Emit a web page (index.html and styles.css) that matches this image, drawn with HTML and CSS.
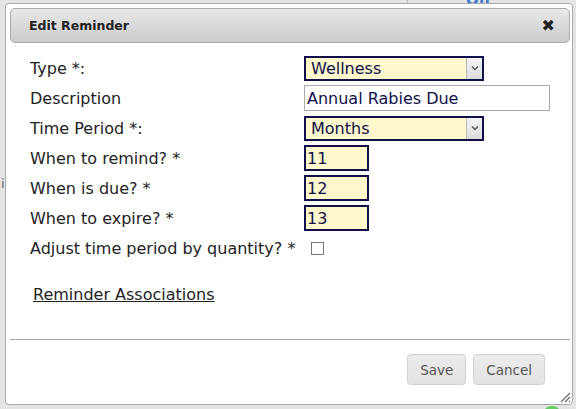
FILE: index.html
```html
<!DOCTYPE html>
<html>
<head>
<meta charset="utf-8">
<link rel="stylesheet" href="styles.css">
</head>
<body>
<div class="backdrop">
  <span class="bg-off">Off</span>
  <span class="bg-line"></span>
  <span class="bg-i">i</span>
  <span class="bg-green"></span>
  <div class="dialog">
    <div class="titlebar">
      <span class="title">Edit Reminder</span>
      <span class="close">✖</span>
    </div>
    <div class="content">
      <div class="form">
        <label class="lbl">Type *:</label>
        <div class="field"><div class="select w180"><span class="val">Wellness</span><span class="arrow"><svg width="8" height="6" viewBox="0 0 8 6"><path d="M1 1.5 L4 4.5 L7 1.5" fill="none" stroke="#555" stroke-width="1.4"/></svg></span></div></div>
        <label class="lbl">Description</label>
        <div class="field"><div class="text">Annual Rabies Due</div></div>
        <label class="lbl">Time Period *:</label>
        <div class="field"><div class="select w180"><span class="val">Months</span><span class="arrow"><svg width="8" height="6" viewBox="0 0 8 6"><path d="M1 1.5 L4 4.5 L7 1.5" fill="none" stroke="#555" stroke-width="1.4"/></svg></span></div></div>
        <label class="lbl">When to remind? *</label>
        <div class="field"><div class="num">11</div></div>
        <label class="lbl">When is due? *</label>
        <div class="field"><div class="num">12</div></div>
        <label class="lbl">When to expire? *</label>
        <div class="field"><div class="num">13</div></div>
        <label class="lbl">Adjust time period by quantity? *</label>
        <div class="field"><span class="check"></span></div>
      </div>
      <div class="assoc"><a class="assoc-link">Reminder Associations</a></div>
    </div>
    <div class="buttons">
      <button class="btn">Save</button>
      <button class="btn">Cancel</button>
    </div>
    <span class="grip"><svg width="12" height="12" viewBox="0 0 12 12"><path d="M11 2 L2 11 M11 6 L6 11 M11 10 L10 11" stroke="#666" stroke-width="1.2"/></svg></span>
  </div>
</div>
</body>
</html>
```

FILE: styles.css
```css
html, body {
  margin: 0;
  padding: 0;
}
body {
  width: 576px;
  height: 409px;
  overflow: hidden;
  background: #e4e4e4;
  font-family: "DejaVu Sans", Verdana, sans-serif;
}
.backdrop {
  position: relative;
  width: 576px;
  height: 409px;
  padding: 3px 0 0 5px;
  box-sizing: border-box;
}
.bg-off {
  position: absolute;
  left: 466px;
  top: -9px;
  color: #3a78d0;
  font-size: 15px;
  font-weight: bold;
}
.bg-line {
  position: absolute;
  left: 407px;
  top: 0;
  width: 1px;
  height: 4px;
  background: #bbb;
}
.bg-i {
  position: absolute;
  left: 1px;
  top: 176px;
  font-size: 13px;
  color: #666;
}
.bg-green {
  position: absolute;
  left: 545px;
  top: 406px;
  width: 14px;
  height: 8px;
  border-radius: 50%;
  background: #6c6;
}
.dialog {
  position: relative;
  width: 568px;
  height: 402px;
  box-sizing: border-box;
  background: #fff;
  border: 1px solid #aaa;
  border-radius: 4px;
  padding: 4px 2px 4px 4px;
  display: flex;
  flex-direction: column;
}
.titlebar {
  height: 35px;
  flex: none;
  box-sizing: border-box;
  border: 1px solid #aaa;
  border-radius: 5px;
  background: linear-gradient(#e8e8e8, #cccccc);
  display: flex;
  align-items: center;
  justify-content: space-between;
  padding: 0 14px 0 18px;
}
.title {
  font-family: "DejaVu Sans", Verdana, sans-serif;
  font-weight: bold;
  font-size: 12.5px;
  color: #222;
}
.close {
  font-size: 16px;
  font-weight: bold;
  color: #222;
  font-family: "DejaVu Sans", sans-serif;
}
.content {
  flex: 1;
  padding: 12px 0 0 20px;
  border-bottom: 1px solid #aaa;
}
.form {
  display: grid;
  grid-template-columns: 274px auto;
  grid-auto-rows: 26px;
  row-gap: 4px;
  align-items: center;
}
.lbl {
  font-size: 16px;
  color: #222;
}
.field {
  display: flex;
  align-items: center;
}
.select {
  height: 25px;
  box-sizing: border-box;
  border: 2px solid #10104a;
  background: #fff8cc;
  display: flex;
  align-items: center;
  justify-content: space-between;
  color: #10104a;
  font-size: 16px;
}
.w180 {
  width: 180px;
}
.val {
  padding-left: 5px;
}
.arrow {
  width: 15px;
  height: 21px;
  background: linear-gradient(#f4f4f4, #dcdcdc);
  border-left: 1px solid #bbb;
  display: flex;
  align-items: center;
  justify-content: center;
}
.text {
  width: 246px;
  height: 26px;
  box-sizing: border-box;
  border: 1px solid #aaa;
  padding: 0 2px;
  display: flex;
  align-items: center;
  font-size: 16px;
  color: #10104a;
}
.num {
  width: 65px;
  height: 26px;
  box-sizing: border-box;
  border: 2px solid #10104a;
  background: #fff8cc;
  padding: 0 1px;
  display: flex;
  align-items: center;
  font-size: 16px;
  color: #10104a;
}
.check {
  width: 13px;
  height: 13px;
  box-sizing: border-box;
  border: 1px solid #777;
  margin-left: 7px;
  background: #fff;
}
.assoc {
  padding: 24px 0 0 3px;
}
.assoc-link {
  font-size: 16px;
  color: #222;
  text-decoration: underline;
}
.buttons {
  height: 60px;
  flex: none;
  display: flex;
  justify-content: flex-end;
  align-items: flex-start;
  gap: 7px;
  padding: 14px 25px 0 0;
  box-sizing: border-box;
}
.btn {
  height: 31px;
  padding: 0 12px;
  border: 1px solid #d0d0d0;
  border-radius: 4px;
  background: linear-gradient(#ececec, #e2e2e2);
  color: #555;
  font-family: "DejaVu Sans", Verdana, sans-serif;
  font-size: 13.5px;
}
.grip {
  position: absolute;
  right: 1px;
  bottom: 1px;
  line-height: 0;
}
```
